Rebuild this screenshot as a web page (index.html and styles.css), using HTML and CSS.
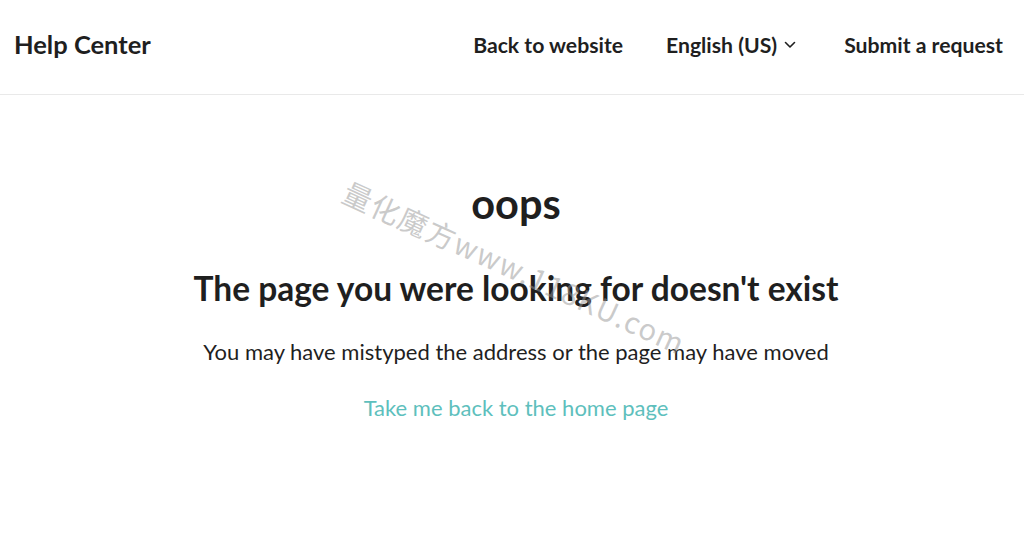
FILE: index.html
```html
<!DOCTYPE html>
<html lang="en">
<head>
<meta charset="utf-8">
<title>Help Center</title>
<link rel="stylesheet" href="styles.css">
</head>
<body>
<header class="header">
  <a class="brand" href="#">Help Center</a>
  <nav class="nav">
    <a class="nav-link" href="#">Back to website</a>
    <a class="nav-link lang" href="#">English (US)
      <svg class="chev" width="12" height="8" viewBox="0 0 12 8"><path d="M1.5 1.5 L6 6 L10.5 1.5" fill="none" stroke="#1f1f1f" stroke-width="1.6" stroke-linecap="round" stroke-linejoin="round"/></svg>
    </a>
    <a class="nav-link" href="#">Submit a request</a>
  </nav>
</header>
<main class="error">
  <h1 class="oops">oops</h1>
  <h2 class="title">The page you were looking for doesn't exist</h2>
  <p class="desc">You may have mistyped the address or the page may have moved</p>
  <a class="home" href="#">Take me back to the home page</a>
</main>
<div class="watermark">量化魔方www.118KU.com</div>
</body>
</html>
```
FILE: styles.css
```css
html, body {
  margin: 0;
  padding: 0;
  background: #fff;
}
body {
  font-family: Lato, "Noto Sans", sans-serif;
  color: #1f1f1f;
  position: relative;
  height: 533px;
  overflow: hidden;
}
a { text-decoration: none; color: inherit; }
.header {
  display: flex;
  align-items: center;
  justify-content: space-between;
  height: 94px;
  padding: 0 21px 0 14px;
  border-bottom: 1px solid #e9e9e9;
}
.brand {
  font-size: 25.5px;
  font-weight: 700;
  padding-bottom: 6px;
}
.nav {
  display: flex;
  align-items: center;
  gap: 43px;
  padding-bottom: 5px;
}
.nav-link {
  font-size: 21.2px;
  font-weight: 700;
  display: flex;
  align-items: center;
}
.lang { margin-right: 5px; }
.chev { margin-left: 7px; margin-top: 1px; }
.error {
  display: flex;
  flex-direction: column;
  align-items: center;
  text-align: center;
  padding-top: 83px;
  padding-left: 8px;
}
.oops {
  margin: 0;
  font-size: 41.5px;
  font-weight: 700;
  line-height: 50px;
}
.title {
  margin: 39px 0 0;
  font-size: 33.5px;
  font-weight: 700;
  line-height: 42px;
}
.desc {
  margin: 29px 0 0;
  font-size: 22px;
  line-height: 28px;
}
.home {
  margin-top: 28px;
  font-size: 22px;
  line-height: 28px;
  color: #5ebfbd;
}
.watermark {
  position: absolute;
  left: 354px;
  top: 170px;
  transform-origin: 0 0;
  transform: rotate(24.5deg);
  font-family: "Noto Sans CJK SC", sans-serif;
  font-size: 29px;
  letter-spacing: 1.6px;
  color: rgba(150, 150, 150, 0.5);
  white-space: nowrap;
  pointer-events: none;
}
```
